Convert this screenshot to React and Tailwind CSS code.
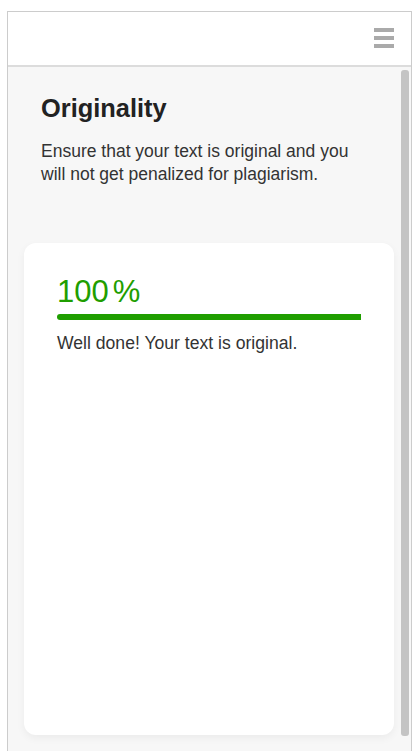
import React from "react";

export default function App() {
  return (
    <div className="h-[751px] w-[419px] overflow-hidden bg-white pt-[11px] pl-[7px]" style={{ fontFamily: '"Liberation Sans", Arial, sans-serif' }}>
      <div className="flex h-[800px] w-[405px] flex-col border border-b-0 border-[#cccccc]">
        <header className="flex h-[55px] shrink-0 items-start justify-end border-b-2 border-[#dcdcdc] bg-white pr-[17px] pt-[16px]">
          <div className="flex w-[20px] flex-col gap-[4px]">
            <span className="block h-[4px] w-[20px] bg-[#aaaaaa]" />
            <span className="block h-[4px] w-[20px] bg-[#aaaaaa]" />
            <span className="block h-[4px] w-[20px] bg-[#aaaaaa]" />
          </div>
        </header>
        <div className="flex flex-1 bg-[#f7f7f7]">
          <main className="flex-1">
            <div className="pl-[33px] pr-[30px] pt-[26px]">
              <h1 className="text-[25.4px] font-bold leading-[30px] text-[#222222]">Originality</h1>
              <p className="mt-[17px] text-[17.5px] leading-[22.5px] text-[#333333]">
                Ensure that your text is original and you will not get penalized for plagiarism.
              </p>
            </div>
            <section className="ml-[16px] mr-[5px] mt-[58px] h-[492px] rounded-[12px] bg-white px-[33px] pt-[31px] shadow-[0_3px_8px_rgba(0,0,0,0.05)]">
              <div className="text-[31px] leading-[36px] text-[#1f9e00]">
                100<span className="ml-[4px]">%</span>
              </div>
              <div className="mt-[4px] h-[6px] w-full rounded-l-full bg-[#1f9e00]" />
              <p className="mt-[12px] text-[17.6px] leading-[22px] text-[#333333]">Well done! Your text is original.</p>
            </section>
          </main>
          <div className="w-[12px] shrink-0 pl-[2px] pr-[2px] pt-[3px]">
            <div className="h-[666px] w-[8px] rounded-[3px] bg-[#c4c4c4]" />
          </div>
        </div>
      </div>
    </div>
  );
}
